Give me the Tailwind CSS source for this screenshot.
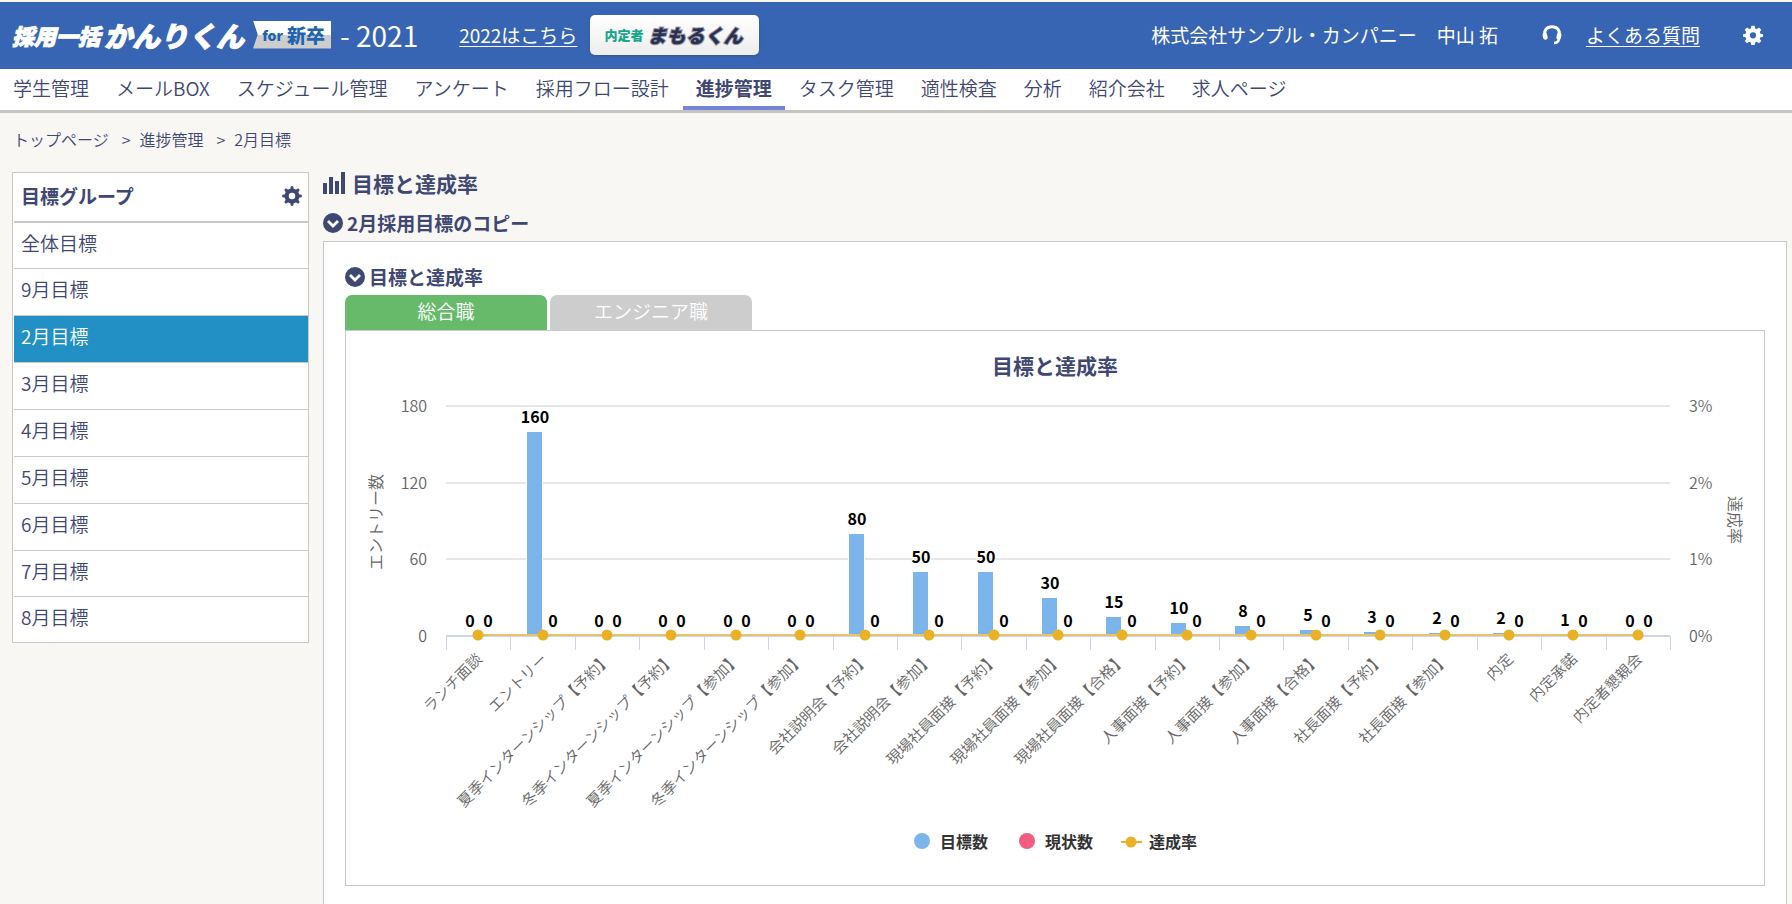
<!DOCTYPE html>
<html lang="ja">
<head>
<meta charset="utf-8">
<meta name="viewport" content="width=device-width, initial-scale=1">
<title>目標と達成率</title>
<script src="https://cdn.jsdelivr.net/npm/@tailwindcss/browser@4"></script>
</head>
<body class="flex min-h-screen flex-col bg-[#f8f7f3] font-['Noto_Sans_CJK_JP',sans-serif] text-[19px] leading-7 font-[350] text-[#3f4773]">
<svg class="hidden" aria-hidden="true">
  <symbol id="gear" viewBox="0 0 24 24">
    <path fill-rule="evenodd" d="M10 1h4l.6 3.1 2 .8L19.200 3.100l2.700 2.700-1.800 2.600.8 2L24 11v3.200l-3.100.5-.8 2 1.800 2.600-2.700 2.700-2.600-1.800-2 .8L14 24h-4l-.6-3-2-.8-2.600 1.800-2.700-2.700 1.800-2.600-.8-2L0 14.200V11l3.100-.6.8-2L2.100 5.800l2.700-2.700 2.600 1.800 2-.8zM12 8.700a3.700 3.700 0 1 0 0 7.400 3.700 3.700 0 0 0 0-7.400z"/>
  </symbol>
  <symbol id="cog" viewBox="0 0 24 24">
    <circle cx="12" cy="12" r="6.400" fill="none" stroke="#3f4773" stroke-width="5"/>
    <g id="teeth"><path d="M9.800 5L10.500 0.300h3L14.200 5zM9.800 19l.7 4.700h3l.7-4.700zM5 9.800L0.300 10.500v3l4.700.7zM19 9.800l4.700.7v3l-4.700.7z"/></g>
    <use href="#teeth" transform="rotate(45 12 12)"/>
  </symbol>
  <symbol id="chevron" viewBox="0 0 20 20">
    <circle cx="10" cy="10" r="10"/>
    <path d="M5 8l5 5 5-5" fill="none" stroke="#fff" stroke-width="2.800"/>
  </symbol>
</svg>

<header class="mt-[2px] flex h-[67px] shrink-0 items-center bg-[#3865b3] pb-[2px] font-normal text-white">
  <a href="#" class="ml-3 flex items-center font-black whitespace-nowrap">
    <span class="text-[22px] italic [-webkit-text-stroke:1px_#fff]">採用一括</span>
    <span class="ml-1 text-[28px] italic [-webkit-text-stroke:1px_#fff]">かんりくん</span>
    <span class="ml-[9px] flex h-7 w-[78px] items-center justify-end gap-1 bg-linear-to-b from-white from-50% to-[#cdcdcd] to-50% pr-[6px] text-[#1f64b0] [clip-path:polygon(0_0,100%_0,100%_100%,0_100%,6%_50%)]">
      <span class="text-[14px]">for</span><span class="text-[19px]">新卒</span>
    </span>
  </a>
  <span class="ml-[9px] text-[28px] whitespace-nowrap">- 2021</span>
  <a href="#" class="ml-[41px] whitespace-nowrap underline underline-offset-3 [text-decoration-skip-ink:none]">2022はこちら</a>
  <button type="button" class="ml-[13px] flex h-10 w-[169px] items-center gap-1 rounded-[5px] bg-linear-to-b from-white to-[#ededed] pl-[14px] font-black whitespace-nowrap shadow-sm">
    <span class="text-[13px] text-[#16a68a]">内定者</span>
    <span class="text-[19px] text-[#2b3052] italic [paint-order:stroke] [-webkit-text-stroke:2px_#9a9cab]">まもるくん</span>
  </button>
  <div class="mr-[29px] ml-auto flex items-center whitespace-nowrap">
    <span>株式会社サンプル・カンパニー</span>
    <span class="ml-5">中山 拓</span>
    <svg class="ml-[44px] h-5 w-5" viewBox="0 0 20 20" fill="none" stroke="#fff" aria-hidden="true">
      <path d="M3 11C1.500 5 5 1.800 10 1.800S18.500 5 17 11" stroke-width="3"/>
      <path d="M2.800 10l.6 2.500M17.200 10l-.6 2.500" stroke-width="4.600" stroke-linecap="round"/>
      <path d="M17.200 13c-.4 3-2.200 5-5.200 5" stroke-width="2.600"/>
    </svg>
    <a href="#" class="ml-6 underline underline-offset-3 [text-decoration-skip-ink:none]">よくある質問</a>
    <button type="button" aria-label="設定" class="ml-[43px]"><svg class="size-5" fill="#fff"><use href="#gear"/></svg></button>
  </div>
</header>

<nav class="flex h-[44px] shrink-0 gap-px border-b-[3px] border-[#c4c4c1] bg-white whitespace-nowrap">
  <a href="#" class="px-[13px] pt-[5px]">学生管理</a>
  <a href="#" class="px-[13px] pt-[5px]">メールBOX</a>
  <a href="#" class="px-[13px] pt-[5px]">スケジュール管理</a>
  <a href="#" class="px-[13px] pt-[5px]">アンケート</a>
  <a href="#" class="px-[13px] pt-[5px]">採用フロー設計</a>
  <a href="#" aria-current="page" class="border-b-4 border-[#7585dc] px-[13px] pt-[5px] font-bold">進捗管理</a>
  <a href="#" class="px-[13px] pt-[5px]">タスク管理</a>
  <a href="#" class="px-[13px] pt-[5px]">適性検査</a>
  <a href="#" class="px-[13px] pt-[5px]">分析</a>
  <a href="#" class="px-[13px] pt-[5px]">紹介会社</a>
  <a href="#" class="px-[13px] pt-[5px]">求人ページ</a>
</nav>

<div class="mt-3 flex gap-[9px] px-[13px] text-[16px]" aria-label="パンくず">
  <a href="#">トップページ</a><span class="pl-1">&gt;</span><a href="#">進捗管理</a><span class="pl-1">&gt;</span><span>2月目標</span>
</div>

<div class="mt-[19px] flex grow items-stretch gap-[14px] pr-[5px] pl-3">
  <aside class="w-[297px] shrink-0 self-start border border-[#c8c8c8] bg-white pl-px">
    <div class="flex h-[48px] items-center justify-between pr-[6px] pb-[2px] pl-[7px] font-bold">
      <h2>目標グループ</h2>
      <button type="button" aria-label="グループ設定"><svg class="size-5" fill="#3f4773"><use href="#cog"/></svg></button>
    </div>
    <ul>
      <li class="h-[47px] border-t-2 border-[#c8c8c8] px-[7px] pt-[6px]"><a href="#">全体目標</a></li>
      <li class="h-[47px] border-t border-[#c8c8c8] px-[7px] pt-[6px]"><a href="#">9月目標</a></li>
      <li class="h-[47px] border-t border-[#c8c8c8] bg-[#228fc5] px-[7px] pt-[6px] text-white"><a href="#" aria-current="true">2月目標</a></li>
      <li class="h-[47px] border-t border-[#c8c8c8] px-[7px] pt-[6px]"><a href="#">3月目標</a></li>
      <li class="h-[47px] border-t border-[#c8c8c8] px-[7px] pt-[6px]"><a href="#">4月目標</a></li>
      <li class="h-[47px] border-t border-[#c8c8c8] px-[7px] pt-[6px]"><a href="#">5月目標</a></li>
      <li class="h-[47px] border-t border-[#c8c8c8] px-[7px] pt-[6px]"><a href="#">6月目標</a></li>
      <li class="h-[46px] border-t border-[#c8c8c8] px-[7px] pt-[6px]"><a href="#">7月目標</a></li>
      <li class="h-[46px] border-t border-[#c8c8c8] px-[7px] pt-[6px]"><a href="#">8月目標</a></li>
    </ul>
  </aside>

  <main class="flex min-w-0 grow flex-col">
    <h1 class="flex h-[22px] items-center gap-[7px] text-[21px] font-bold">
      <svg class="h-[22px] w-[22px]" viewBox="0 0 22 22" fill="#3f4773" aria-hidden="true"><rect x="0" y="11" width="4" height="11"/><rect x="6" y="5" width="4" height="17"/><rect x="12" y="9" width="4" height="13"/><rect x="18" y="0" width="4" height="22"/></svg>
      目標と達成率
    </h1>
    <h2 class="mt-[15px] flex h-7 items-center gap-1 font-bold">
      <svg class="size-5" fill="#3f4773" aria-hidden="true"><use href="#chevron"/></svg>
      2月採用目標のコピー
    </h2>
    <section class="mt-1 grow border border-b-0 border-[#c8c8c8] bg-white px-[21px] pt-[21px] pb-[18px]">
      <h3 class="flex h-7 items-center gap-1 font-bold">
        <svg class="size-5" fill="#3f4773" aria-hidden="true"><use href="#chevron"/></svg>
        目標と達成率
      </h3>
      <div class="mt-1 flex gap-[3px] text-white" role="tablist">
        <button type="button" role="tab" aria-selected="true" class="h-[35px] w-[202px] rounded-t-[7px] bg-[#67ba6a] pb-1">総合職</button>
        <button type="button" role="tab" aria-selected="false" class="h-[35px] w-[202px] rounded-t-[7px] bg-[#cdcdcd] pb-1">エンジニア職</button>
      </div>
      <div class="border border-[#c8c8c8]" role="tabpanel">
        <svg id="chart" class="block h-[554px] w-full" role="img" aria-label="目標と達成率"></svg>
      </div>
    </section>
  </main>
</div>

<script>
  const data = [
    ['ランチ面談', 0], ['エントリー', 160], ['夏季インターンシップ【予約】', 0], ['冬季インターンシップ【予約】', 0],
    ['夏季インターンシップ【参加】', 0], ['冬季インターンシップ【参加】', 0], ['会社説明会【予約】', 80], ['会社説明会【参加】', 50],
    ['現場社員面接【予約】', 50], ['現場社員面接【参加】', 30], ['現場社員面接【合格】', 15], ['人事面接【予約】', 10],
    ['人事面接【参加】', 8], ['人事面接【合格】', 5], ['社長面接【予約】', 3], ['社長面接【参加】', 2],
    ['内定', 2], ['内定承諾', 1], ['内定者懇親会', 0]
  ];
  const svg = document.getElementById('chart');
  function draw() {
    const W = Math.round(svg.getBoundingClientRect().width), left = 100, right = W - 94, top = 75, base = 305;
    const step = (right - left) / data.length, mid = Math.round(W / 2);
    const text = (x, y, s, cls, anchor, extra = '') => `<text x="${x}" y="${y}" text-anchor="${anchor}" class="${cls}" ${extra}>${s}</text>`;
    const axis = 'fill-[#666666] text-[16px]';
    let out = text(mid, 43, '目標と達成率', 'fill-[#3f4773] text-[21px] font-bold', 'middle');
    for (let i = 0; i < 4; i++) {
      const y = Math.round(base - i * (base - top) / 3);
      out += `<rect x="${left}" y="${y - 1}" width="${right - left}" height="2" fill="${i ? '#e6e6e6' : '#ccd6eb'}"/>`;
      out += text(left - 19, y + 6, i * 60, axis, 'end') + text(right + 19, y + 6, i + '%', axis, 'start');
    }
    out += text(0, 0, 'エントリー数', axis, 'middle', `transform="translate(36 191) rotate(-90)"`);
    out += text(0, 0, '達成率', axis, 'middle', `transform="translate(${W - 35} 189) rotate(90)"`);
    for (let i = 0; i <= data.length; i++)
      out += `<rect x="${Math.round(left + i * step)}" y="${base}" width="1" height="14" fill="#ccd6eb"/>`;
    data.forEach(([name, v], i) => {
      const c = Math.round(left + (i + .5) * step), h = Math.round(v * 230 / 180);
      if (h) out += `<rect x="${c - 17}" y="${base - h}" width="17" height="${h}" fill="#fff"/><rect x="${c - 16}" y="${base - h}" width="15" height="${h}" fill="#7cb5ec"/>`;
      out += text(0, 0, name, 'fill-[#666666] text-[15px]', 'end', `transform="translate(${c + 5} 329) rotate(-45)"`);
    });
    const first = Math.round(left + step / 2), last = Math.round(right - step / 2);
    out += `<rect x="${first}" y="${base - 2}" width="${last - first}" height="2" fill="#e8c36a"/>`;
    data.forEach(([name, v], i) => {
      const c = Math.round(left + (i + .5) * step), h = Math.round(v * 230 / 180);
      const num = 'fill-black stroke-white stroke-2 [paint-order:stroke] text-[16px] font-bold';
      out += `<circle cx="${c}" cy="${base - 1}" r="5.500" fill="#e9b126"/>`;
      out += text(c - 8, base - h - 9, v, num, 'middle') + text(c + 10, base - 9, 0, num, 'middle');
    });
    const lg = 'fill-[#333333] text-[16px] font-bold';
    out += `<circle cx="${mid - 133}" cy="510" r="8" fill="#7cb5ec"/>` + text(mid - 115, 517, '目標数', lg, 'start');
    out += `<circle cx="${mid - 28}" cy="510" r="8" fill="#f15c80"/>` + text(mid - 10, 517, '現状数', lg, 'start');
    out += `<rect x="${mid + 66}" y="510" width="21" height="2" fill="#e9b126"/><circle cx="${mid + 76}" cy="511" r="5.500" fill="#e9b126"/>` + text(mid + 94, 517, '達成率', lg, 'start');
    svg.innerHTML = out;
  }
  new ResizeObserver(draw).observe(svg);
</script>
</body>
</html>
